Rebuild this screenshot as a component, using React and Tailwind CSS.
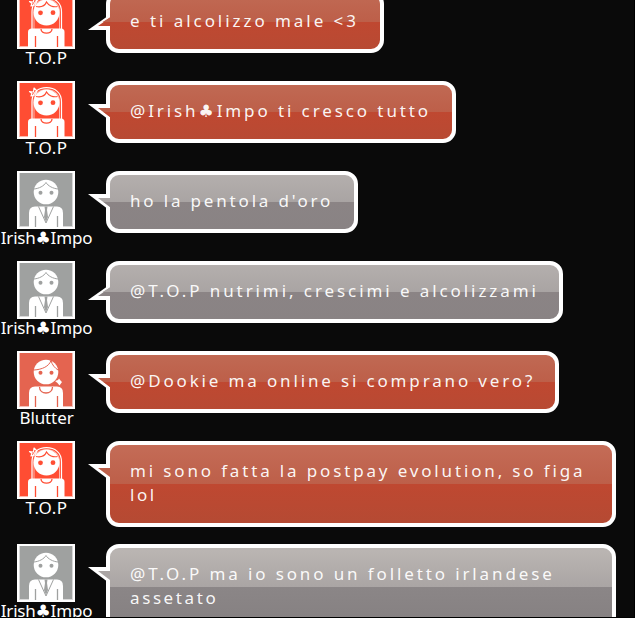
const THEMES = {
  red: {
    1: 'bg-[linear-gradient(#c06953_0%,#bd5f49_50%,#bf4831_50%,#b84a33_100%)]',
    2: 'bg-[linear-gradient(#c46c57_0%,#bd5f49_50%,#bf4831_50%,#b54a33_100%)]',
    top: '#bd604a',
    bottom: '#bf4831',
  },
  gray: {
    1: 'bg-[linear-gradient(#b4afad_0%,#a9a4a3_50%,#8b8485_50%,#898384_100%)]',
    2: 'bg-[linear-gradient(#bbb6b3_0%,#aaa5a4_50%,#8b8687_50%,#858081_100%)]',
    top: '#aaa5a4',
    bottom: '#8b8485',
  },
};

const USERS = {
  top: { name: 'T.O.P', color: '#ff4d33', theme: 'red', spacing: 'tracking-[0.5px]' },
  irish: { name: 'Irish♣Impo', color: '#9fa1a0', theme: 'gray', spacing: 'tracking-[-0.2px]' },
  blutter: { name: 'Blutter', color: '#e46450', theme: 'red', spacing: 'tracking-[-0.1px]' },
};

const MESSAGES = [
  { user: 'top', lines: ['e ti alcolizzo male <3'], width: 'w-[278px]', spacing: 'tracking-[2.95px]', down: true },
  { user: 'top', lines: ['@Irish♣Impo ti cresco tutto'], width: 'w-[350px]', spacing: 'tracking-[2.9px]' },
  { user: 'irish', lines: ["ho la pentola d'oro"], width: 'w-[252px]', spacing: 'tracking-[2.83px]' },
  { user: 'irish', lines: ['@T.O.P nutrimi, crescimi e alcolizzami'], width: 'w-[457px]', spacing: 'tracking-[2.92px]', down: true },
  { user: 'blutter', lines: ['@Dookie ma online si comprano vero?'], width: 'w-[453px]', spacing: 'tracking-[2.85px]' },
  { user: 'top', lines: ['mi sono fatta la postpay evolution, so figa', 'lol'], width: 'w-[510px]', spacing: 'tracking-[2.85px]' },
  { user: 'irish', lines: ['@T.O.P ma io sono un folletto irlandese', 'assetato'], width: 'w-[510px]', spacing: 'tracking-[2.88px]' },
];

function Avatar({ user, color }) {
  return (
    <svg className="block size-[58px] shrink-0" viewBox="0 0 58 58" fill="none">
      <rect width="58" height="58" fill="#fff" />
      <rect x="2" y="2" width="54" height="54" fill={color} opacity="0.4" />
      <rect x="3" y="2" width="52" height="53" fill={color} />
      {user === 'top' && (
        <g>
          <path d="M15 38V21C15 11 21.500 6.700 29.500 6.700S44.500 11 44.500 21V38" stroke="#fff" strokeWidth="1.2" />
          <path d="M17 38V21C17 12 22.500 8.700 29.500 8.700S42.500 12 42.500 21V38" stroke="#fff" strokeWidth="0.6" />
          <path d="M12.500 10.500L16.500 11L17 7L20 10L18 14L14 15L15 12.500Z" stroke="#fff" strokeWidth="1.2" strokeLinejoin="round" />
        </g>
      )}
      {user === 'top' ? (
        <circle cx="29.500" cy="21.500" r="13" fill="#fff" />
      ) : (
        <circle cx="29" cy="21" r="12.300" fill="#fff" />
      )}
      {user === 'top' && (
        <path d="M19 15.500C24 16.500 28 14.500 29.500 11C31.500 14.500 36 16.500 40.500 15.500" stroke={color} strokeWidth="1.200" />
      )}
      {user === 'irish' && (
        <path d="M17 18C22 17.500 27 15 29 11.500C31 15 36 17.500 41 18" stroke={color} strokeWidth="1" />
      )}
      {user === 'blutter' && (
        <g>
          <path d="M17 19C25 18.500 32 15.500 34 9.500C35 14 38 17 41 19" stroke={color} strokeWidth="1" />
          <path d="M38 30L41 29L42 27.500L43.500 29.500L45 31L42.500 34.500L40.500 32Z" fill="#fff" />
        </g>
      )}
      <circle cx="23.500" cy="21.800" r={user === 'top' ? 2.400 : 2} fill={color} />
      <circle cx={user === 'top' ? 36 : 34.500} cy="21.700" r={user === 'top' ? 2.400 : 2} fill={color} />
      {user === 'top' ? (
        <path d="M11 57V41Q11 37.500 15 37.500H44Q47.500 37.500 47.500 41V57Z" fill="#fff" />
      ) : (
        <path d="M12 57V42Q12 35.500 18 35.500H40Q46 35.500 46 42V57Z" fill="#fff" />
      )}
      <path d="M18.500 45V56M40.500 45V56" stroke={color} strokeWidth="1.300" />
      {user === 'top' && <path d="M24 38C24 43.500 35 43.500 35 38" stroke={color} strokeWidth="1.300" />}
      {user === 'blutter' && <path d="M22.500 36C22.500 44 35.500 44 35.500 36" stroke={color} strokeWidth="1.300" />}
      {user === 'irish' && (
        <g>
          <path d="M21.500 35.500L29 52L36.500 35.500" stroke={color} strokeWidth="1" />
          <path d="M27.500 35.500H30.500L30 39L31 46L29 51L27 46L28 39Z" fill={color} />
        </g>
      )}
    </svg>
  );
}

function Tail({ down, top, bottom, tall }) {
  return (
    <svg
      className={`absolute left-[-22px] h-[18px] w-[26px] ${down ? 'top-[18px]' : 'top-[19px]'}`}
      viewBox="0 0 26 18"
    >
      {down ? (
        <g>
          <path d="M0 17L18.500 4H22V17Z" fill="#fff" />
          <path d="M10 13L22 4.500V13Z" fill={bottom} />
          <path d="M14.500 9L22 4.500V9Z" fill={top} />
        </g>
      ) : (
        <g>
          <path d="M0 0H22V15L18.500 14Z" fill="#fff" />
          <path d="M10 4H22V13Z" fill={top} />
          {!tall && <path d="M15.500 8H22V13Z" fill={bottom} />}
        </g>
      )}
    </svg>
  );
}

function Message({ user, lines, width, spacing, down }) {
  const { name, color, theme, spacing: nameSpacing } = USERS[user];
  const colors = THEMES[theme];
  return (
    <div className="flex min-h-[90px] items-start pb-[17px]">
      <div className="flex h-[73px] w-[92px] shrink-0 flex-col items-center">
        <Avatar user={user} color={color} />
        <span className={`ml-px whitespace-nowrap text-[17px] leading-[18px] ${nameSpacing}`}>{name}</span>
      </div>
      <div
        className={`relative ml-[14px] shrink-0 rounded-[13px] border-4 border-white bg-origin-padding px-5 pb-4 pt-[14px] ${width} ${colors[lines.length]}`}
      >
        <Tail down={down} top={colors.top} bottom={colors.bottom} tall={lines.length > 1} />
        {lines.map((line, index) => (
          <p
            key={line}
            className={`whitespace-nowrap text-[17px] leading-6 text-white/95 ${index === 0 ? spacing : 'tracking-[2.6px]'}`}
          >
            {line}
          </p>
        ))}
      </div>
    </div>
  );
}

export default function App() {
  return (
    <main className="h-[618px] w-[635px] overflow-hidden border-b border-r border-black bg-[#0a0a0a] font-['Noto_Sans','DejaVu_Sans',sans-serif] text-white">
      <div className="-mt-[9px]">
        {MESSAGES.map((message) => (
          <Message key={message.lines[0]} {...message} />
        ))}
      </div>
    </main>
  );
}
